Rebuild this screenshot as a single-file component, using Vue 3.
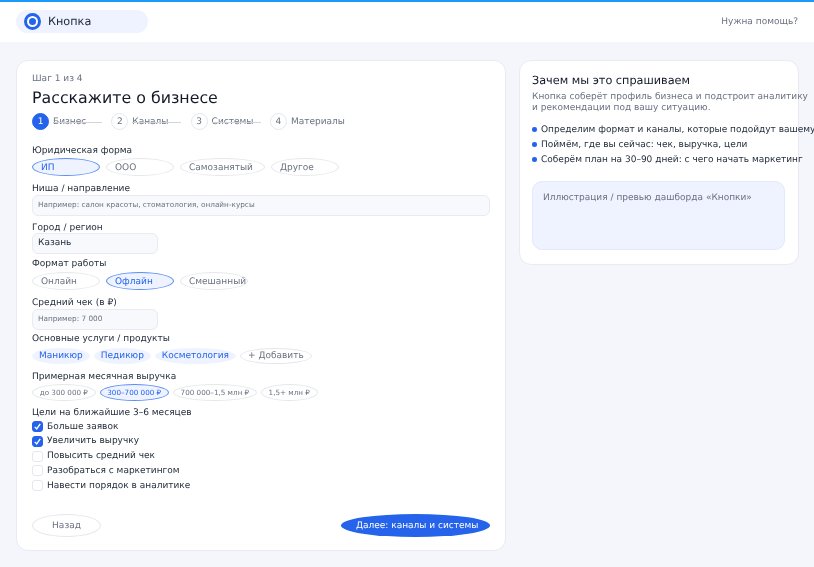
<script setup>
const steps = [
  { n: 1, label: 'Бизнес', active: true, line: true },
  { n: 2, label: 'Каналы', line: true },
  { n: 3, label: 'Системы', line: true },
  { n: 4, label: 'Материалы', line: false },
]
const forms = [
  { t: 'ИП', on: true, cls: 'w68' },
  { t: 'ООО', cls: 'w68' },
  { t: 'Самозанятый', cls: 'w85' },
  { t: 'Другое', cls: 'w68' },
]
const formats = [
  { t: 'Онлайн', cls: 'w68' },
  { t: 'Офлайн', on: true, cls: 'w68' },
  { t: 'Смешанный', cls: 'w68' },
]
const services = ['Маникюр', 'Педикюр', 'Косметология']
const revenue = [
  { t: 'до 300 000 ₽' },
  { t: '300–700 000 ₽', on: true },
  { t: '700 000–1,5 млн ₽' },
  { t: '1,5+ млн ₽' },
]
const goals = [
  { t: 'Больше заявок', on: true },
  { t: 'Увеличить выручку', on: true },
  { t: 'Повысить средний чек' },
  { t: 'Разобраться с маркетингом' },
  { t: 'Навести порядок в аналитике' },
]
const reasons = [
  'Определим формат и каналы, которые подойдут вашему бизнесу',
  'Поймём, где вы сейчас: чек, выручка, цели',
  'Соберём план на 30–90 дней: с чего начать маркетинг',
]
</script>

<template>
  <div class="page">
    <header class="top">
      <div class="brand">
        <span class="logo"></span>
        <span class="brand-name">Кнопка</span>
      </div>
      <span class="help">Нужна помощь?</span>
    </header>

    <main class="main">
      <section class="card form">
        <div class="step-of">Шаг 1 из 4</div>
        <h1 class="title">Расскажите о бизнесе</h1>
        <div class="steps">
          <div v-for="s in steps" :key="s.n" class="step" :class="{ lined: s.line }">
            <span class="num" :class="{ active: s.active }">{{ s.n }}</span>
            <span class="step-label">{{ s.label }}</span>
          </div>
        </div>

        <div class="field f-legal">
          <div class="label">Юридическая форма</div>
          <div class="row r6">
            <span v-for="o in forms" :key="o.t" class="pill" :class="[o.cls, { on: o.on }]">{{ o.t }}</span>
          </div>
        </div>

        <div class="field f-niche">
          <div class="label">Ниша / направление</div>
          <div class="input ph">Например: салон красоты, стоматология, онлайн-курсы</div>
        </div>

        <div class="field f-city">
          <div class="label">Город / регион</div>
          <div class="input short">Казань</div>
        </div>

        <div class="field f-format">
          <div class="label">Формат работы</div>
          <div class="row r6">
            <span v-for="o in formats" :key="o.t" class="pill" :class="[o.cls, { on: o.on }]">{{ o.t }}</span>
          </div>
        </div>

        <div class="field f-check">
          <div class="label">Средний чек (в ₽)</div>
          <div class="input short ph">Например: 7 000</div>
        </div>

        <div class="field f-services">
          <div class="label">Основные услуги / продукты</div>
          <div class="row r4">
            <span v-for="s in services" :key="s" class="tag">{{ s }}</span>
            <span class="tag add">+ Добавить</span>
          </div>
        </div>

        <div class="field f-revenue">
          <div class="label">Примерная месячная выручка</div>
          <div class="row r4">
            <span v-for="o in revenue" :key="o.t" class="rev" :class="{ on: o.on }">{{ o.t }}</span>
          </div>
        </div>

        <div class="field f-goals">
          <div class="label">Цели на ближайшие 3–6 месяцев</div>
          <div class="goals">
            <div v-for="g in goals" :key="g.t" class="goal">
              <span class="box" :class="{ on: g.on }">
                <svg v-if="g.on" viewBox="0 0 12 12" width="11" height="11">
                  <path d="M3 6.4 5.1 8.6 9 3.2" fill="none" stroke="#fff" stroke-width="1.5" />
                </svg>
              </span>
              <span>{{ g.t }}</span>
            </div>
          </div>
        </div>

        <div class="actions">
          <span class="btn back">Назад</span>
          <span class="btn next">Далее: каналы и системы</span>
        </div>
      </section>

      <aside class="card why">
        <h2 class="why-title">Зачем мы это спрашиваем</h2>
        <p class="why-sub">Кнопка соберёт профиль бизнеса и подстроит аналитику<br />и рекомендации под вашу ситуацию.</p>
        <ul class="why-list">
          <li v-for="r in reasons" :key="r">{{ r }}</li>
        </ul>
        <div class="preview">Иллюстрация / превью дашборда «Кнопки»</div>
      </aside>
    </main>
  </div>
</template>

<style>
html, body { margin: 0; background: #f4f6fb; overflow: hidden; }
</style>

<style scoped>
.page {
  width: 814px;
  height: 567px;
  overflow: hidden;
  background: #f4f6fb;
  font-family: "DejaVu Sans", sans-serif;
  text-rendering: geometricPrecision;
  color: #1f2937;
  font-size: 9px;
  filter: blur(0.3px);
}
.top {
  height: 40px;
  box-sizing: content-box;
  border-top: 2px solid #1a9bfc;
  background: #fff;
  display: flex;
  align-items: center;
  justify-content: space-between;
  padding: 0 16px;
}
.brand {
  width: 132px;
  height: 23px;
  margin-top: -1px;
  background: #eef3ff;
  border-radius: 12px;
  display: flex;
  align-items: center;
  box-sizing: border-box;
  padding-left: 8px;
  gap: 7px;
}
.logo {
  width: 17px;
  height: 17px;
  border-radius: 50%;
  background: #fff;
  border: 3px solid #2563eb;
  box-sizing: border-box;
  display: flex;
  align-items: center;
  justify-content: center;
}
.logo::after {
  content: "";
  width: 7px;
  height: 7px;
  border-radius: 50%;
  background: #2563eb;
}
.brand-name { font-size: 11.25px; color: #1f2937; }
.help { color: #6b7280; }

.main {
  display: grid;
  grid-template-columns: 489.5px 279.5px;
  gap: 13.5px;
  padding: 18px 16px;
  align-items: start;
}
.card {
  background: #fff;
  border: 1px solid #e8ebf2;
  border-radius: 12px;
  box-sizing: border-box;
}
.form {
  height: 491px;
  padding: 12px 15px 0;
  display: flex;
  flex-direction: column;
}
.step-of { color: #6b7280; line-height: 12px; }
.title { font-size: 15.8px; font-weight: 400; margin: 3px 0 0; line-height: 20px; color: #111827; }
.steps { display: flex; gap: 9.3px; margin-top: 5px; }
.step { display: flex; align-items: center; gap: 4px; width: 70px; position: relative; white-space: nowrap; }
.step.lined::after {
  content: "";
  position: absolute;
  left: 21px;
  right: 0;
  top: 50%;
  height: 1px;
  background: #d1d5db;
}
.num {
  flex: none;
  width: 17px;
  height: 17px;
  border-radius: 50%;
  border: 1px solid #e5e7eb;
  box-sizing: border-box;
  display: flex;
  align-items: center;
  justify-content: center;
  color: #6b7280;
}
.num.active { background: #2563eb; border-color: #2563eb; color: #fff; }
.step-label { color: #6b7280; }

.field { display: flex; flex-direction: column; gap: 2px; }
.label { line-height: 12px; color: #1f2937; font-size: 9.05px; }
.f-legal { margin-top: 15px; gap: 1px; }
.f-niche { margin-top: 7px; gap: 0; }
.f-city { margin-top: 6px; gap: 0; }
.f-city .label { margin-bottom: -1px; }
.f-format { margin-top: 4px; gap: 2px; }
.f-check { margin-top: 7px; gap: 0; }
.f-check .label { margin-bottom: -0.5px; }
.f-services { margin-top: 3.5px; gap: 3px; }
.f-revenue { margin-top: 7px; gap: 1px; }
.f-goals { margin-top: 6px; gap: 1.5px; }

.row { display: flex; }
.r6 { gap: 6px; }
.r4 { gap: 4px; }
.pill {
  height: 18px;
  box-sizing: border-box;
  border: 1px solid #e5e7eb;
  border-radius: 50%;
  padding-left: 8px;
  line-height: 18px;
  color: #6b7280;
  background: #fff;
  white-space: nowrap;
}
.w68 { width: 68px; }
.w85 { width: 85px; }
.pill.on, .rev.on {
  background: #eef3ff;
  border-color: #5b8ff0;
  color: #2563eb;
}
.input {
  height: 21px;
  box-sizing: border-box;
  background: #f8f9fc;
  border: 1px solid #e8ebf2;
  border-radius: 6px;
  padding-left: 5px;
  line-height: 19px;
  color: #1f2937;
}
.input.short { width: 126px; }
.input.ph { font-size: 7.3px; color: #6b7280; line-height: 18px; }
.tag {
  height: 16px;
  box-sizing: border-box;
  padding: 0 7px;
  border-radius: 50%;
  background: #eef3ff;
  color: #2563eb;
  line-height: 16px;
  white-space: nowrap;
}
.tag.add { background: #fff; border: 1px solid #e5e7eb; color: #6b7280; line-height: 14px; }
.rev {
  height: 17px;
  box-sizing: border-box;
  padding: 0 6.7px;
  border: 1px solid #e5e7eb;
  border-radius: 50%;
  color: #6b7280;
  font-size: 7.2px;
  line-height: 15px;
  white-space: nowrap;
}
.goals { display: flex; flex-direction: column; gap: 2.75px; }
.goal { display: flex; align-items: center; gap: 4px; height: 12px; }
.box {
  flex: none;
  width: 11px;
  height: 11px;
  box-sizing: border-box;
  border: 1px solid #e5e7eb;
  border-radius: 3px;
  display: flex;
  align-items: center;
  justify-content: center;
  background: #fff;
}
.box.on { background: #2563eb; border-color: #2563eb; }
.box svg { flex: none; }
.actions {
  margin-top: auto;
  margin-bottom: 13px;
  display: flex;
  justify-content: space-between;
}
.btn {
  height: 23px;
  box-sizing: border-box;
  border-radius: 50%;
  white-space: nowrap;
}
.back { width: 69px; border: 1px solid #e5e7eb; color: #6b7280; text-align: center; line-height: 22px; }
.next { width: 148.5px; background: #2563eb; color: #fff; line-height: 24px; padding-left: 15px; }

.why {
  padding: 13px 12px 12px;
  height: 205px;
}
.why-title { font-size: 11.25px; font-weight: 400; margin: 0; line-height: 14px; color: #111827; white-space: nowrap; }
.why-sub { margin: 3.5px 0 0; line-height: 11px; color: #6b7280; white-space: nowrap; }
.why-list { list-style: none; margin: 9.5px 0 0; padding: 0; }
.why-list li {
  white-space: nowrap;
  line-height: 15px;
  padding-left: 9px;
  position: relative;
  color: #1f2937;
}
.why-list li::before {
  content: "";
  position: absolute;
  left: 0;
  top: 4px;
  width: 4.5px;
  height: 4.5px;
  border-radius: 50%;
  background: #2563eb;
}
.preview {
  margin-top: 13px;
  width: 253px;
  height: 69px;
  box-sizing: border-box;
  background: #eef3ff;
  border: 1px solid #e2e9f8;
  border-radius: 10px;
  padding: 11px 10px;
  color: #6b7280;
  white-space: nowrap;
}
</style>
